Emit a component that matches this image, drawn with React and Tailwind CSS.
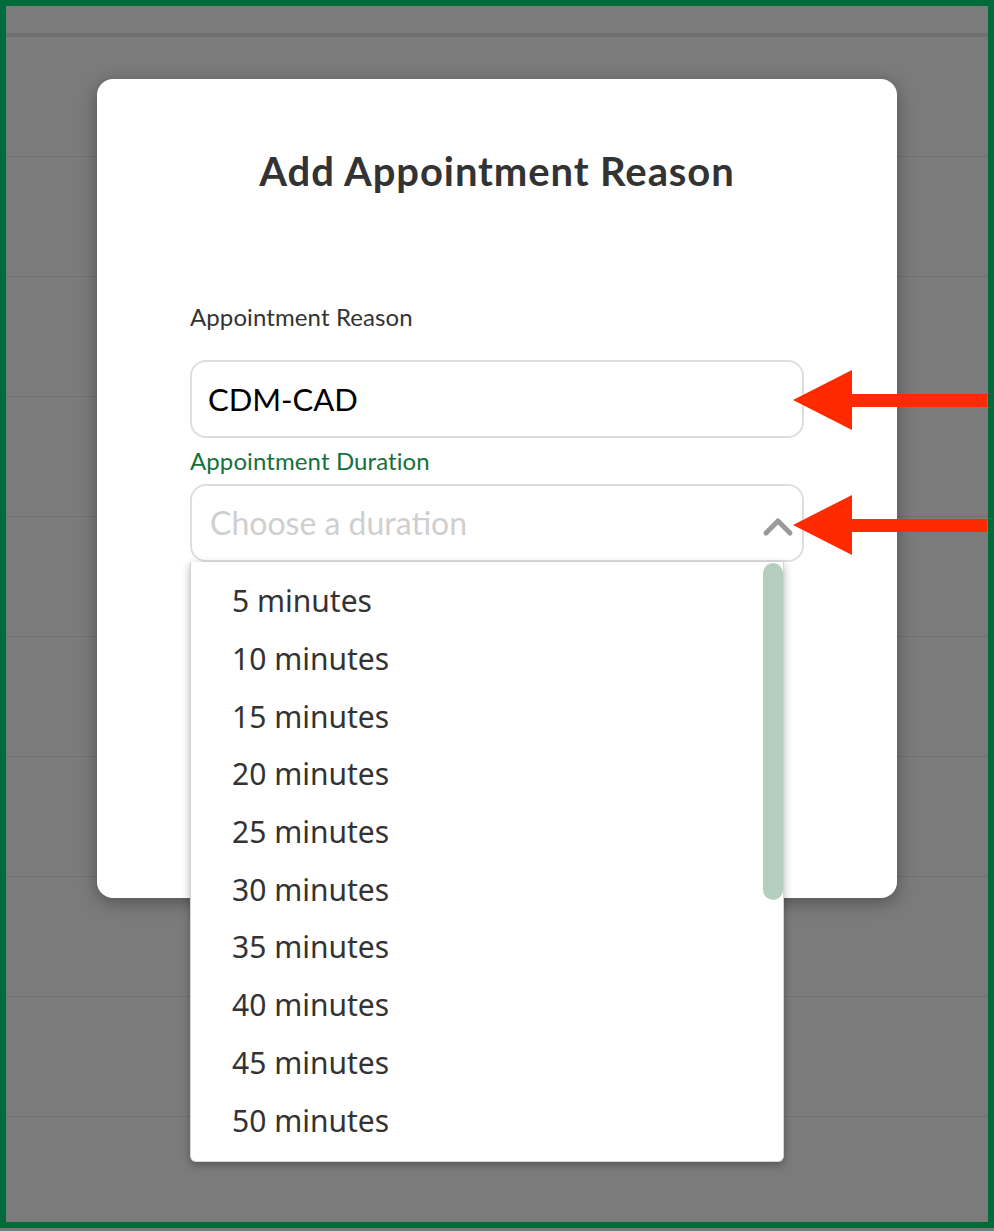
import React from 'react'

const durations = [5, 10, 15, 20, 25, 30, 35, 40, 45, 50]

function Arrow({ top }) {
  // red annotation arrow pointing left at a field
  return (
    <svg className="absolute left-[793px]" style={{ top }} width="194" height="60" viewBox="0 0 194 60">
      <polygon points="0,30 59,0 59,60" fill="#ff2a00" />
      <rect x="58" y="24" width="136" height="13" fill="#ff2a00" />
    </svg>
  )
}

export default function App() {
  return (
    <div className="relative w-[994px] h-[1231px] bg-[#7b7b7b] overflow-hidden font-['Lato',sans-serif]">
      <div className="h-[1228px] border-[6px] border-[#006b3a] flex flex-col">
        {/* dimmed page behind the modal */}
        <div className="h-[27px] shrink-0" />
        <div className="h-[4px] shrink-0 bg-[#6f6f6f]" />
        <div className="h-[120px] shrink-0 border-b border-[#717171]" />
        {Array.from({ length: 8 }).map((_, i) => (
          <div key={i} className="h-[120px] shrink-0 border-b border-[#717171]" />
        ))}
      </div>

      {/* Modal */}
      <div className="absolute left-[97px] top-[79px] w-[800px] h-[819px] bg-white rounded-2xl shadow-[0_4px_18px_rgba(0,0,0,0.35)] pt-[68px] px-[93px]">
        <h1 className="text-center text-[40px] leading-[48px] font-bold text-[#333] tracking-[0.9px]">
          Add Appointment Reason
        </h1>

        <p className="mt-[108px] text-[24px] leading-[28px] text-[#333] tracking-[0.1px]">Appointment Reason</p>
        <div className="mt-[29px] h-[78px] rounded-2xl border-2 border-[#dedede] flex items-center px-[16px]">
          <span className="text-[31px] text-black">CDM-CAD</span>
        </div>

        <p className="mt-[9px] text-[24px] leading-[28px] text-[#16703c] tracking-[0.1px]">Appointment Duration</p>
        <div className="relative mt-[9px]">
          <div className="h-[78px] rounded-2xl border-2 border-[#dedede] flex items-center justify-between pl-[18px] pr-[8px]">
            <span className="text-[32px] text-[#cfcfcf]">Choose a duration</span>
            <svg width="32" height="22" viewBox="0 0 32 22" className="mt-[6px]">
              <polyline points="4,18 16,6 28,18" fill="none" stroke="#9a9a9a" strokeWidth="5" strokeLinecap="round" strokeLinejoin="round" />
            </svg>
          </div>

          {/* Dropdown list */}
          <div className="absolute left-0 top-[78px] w-[594px] h-[600px] bg-white border border-[#d4d4d4] border-t-0 rounded-b-md shadow-[0_3px_8px_rgba(0,0,0,0.3)] pt-[10px] pb-[13px] font-['Noto_Sans',sans-serif] z-10">
            {durations.map(d => (
              <div key={d} className="h-[57.7px] flex items-center pl-[41px] text-[30px] text-[#333]">
                {d} minutes
              </div>
            ))}
            <div className="absolute right-0 top-[1px] w-[20px] h-[337px] rounded-full bg-[#b5cfbf]" />
          </div>
        </div>
      </div>

      <Arrow top={370} />
      <Arrow top={495} />
    </div>
  )
}
